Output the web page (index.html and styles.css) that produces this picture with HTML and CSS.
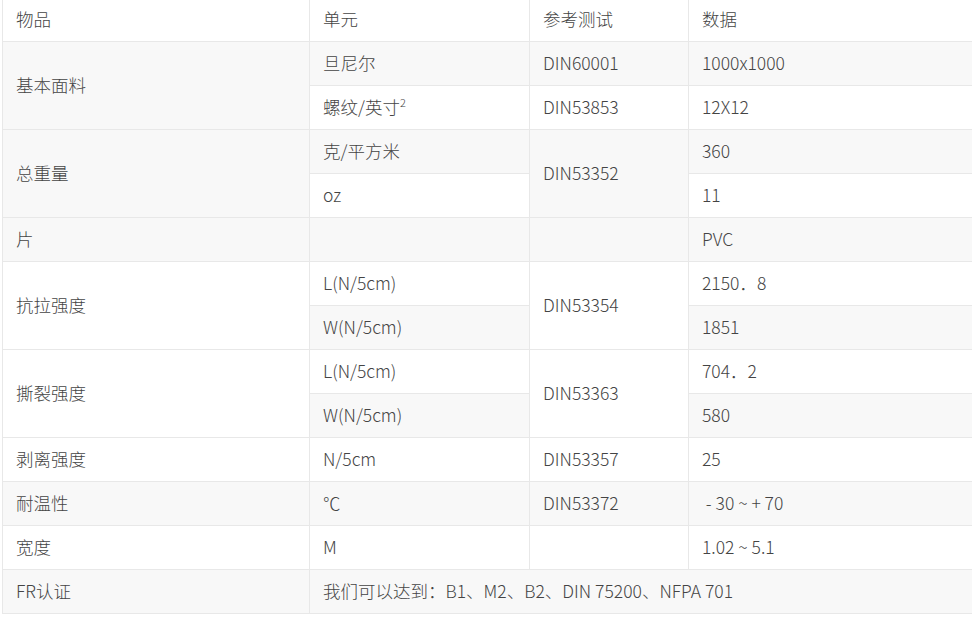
FILE: index.html
```html
<!DOCTYPE html>
<html lang="zh-CN">
<head>
<meta charset="utf-8">
<title>参数表</title>
<link rel="stylesheet" href="styles.css">
</head>
<body>
<div class="wrap">
<table class="spec">
  <colgroup>
    <col class="c1"><col class="c2"><col class="c3"><col class="c4">
  </colgroup>
  <thead>
    <tr><td>物品</td><td>单元</td><td>参考测试</td><td>数据</td></tr>
  </thead>
  <tbody>
    <tr><td rowspan="2">基本面料</td><td>旦尼尔</td><td>DIN60001</td><td>1000x1000</td></tr>
    <tr><td>螺纹/英寸<sup>2</sup></td><td>DIN53853</td><td>12X12</td></tr>
    <tr><td rowspan="2">总重量</td><td>克/平方米</td><td rowspan="2">DIN53352</td><td>360</td></tr>
    <tr><td>oz</td><td>11</td></tr>
    <tr><td>片</td><td></td><td></td><td>PVC</td></tr>
    <tr><td rowspan="2">抗拉强度</td><td>L(N/5cm)</td><td rowspan="2">DIN53354</td><td>2150．8</td></tr>
    <tr><td>W(N/5cm)</td><td>1851</td></tr>
    <tr><td rowspan="2">撕裂强度</td><td>L(N/5cm)</td><td rowspan="2">DIN53363</td><td>704．2</td></tr>
    <tr><td>W(N/5cm)</td><td>580</td></tr>
    <tr><td>剥离强度</td><td>N/5cm</td><td>DIN53357</td><td>25</td></tr>
    <tr><td>耐温性</td><td>℃</td><td>DIN53372</td><td>&nbsp;- 30 ~ + 70</td></tr>
    <tr><td>宽度</td><td>M</td><td></td><td>1.02 ~ 5.1</td></tr>
    <tr><td>FR认证</td><td colspan="3">我们可以达到：B1、M2、B2、DIN 75200、NFPA 701</td></tr>
  </tbody>
</table>
</div>
</body>
</html>
```
FILE: styles.css
```css
html, body {
  margin: 0;
  padding: 0;
  background: #ffffff;
}
.wrap {
  overflow: hidden;
  height: 617px;
}
.spec {
  border-collapse: collapse;
  table-layout: fixed;
  width: 990px;
  margin: -3px 0 0 2px;
  font-family: "Noto Sans CJK SC", "Noto Sans", sans-serif;
  font-weight: 300;
  font-size: 17.5px;
  color: #444444;
}
.c1 { width: 307px; }
.c2 { width: 220px; }
.c3 { width: 159px; }
.c4 { width: 304px; }
.spec td {
  border: 1px solid #e8e8e8;
  height: 41px;
  padding: 0 13px 2px;
  vertical-align: middle;
  line-height: 20px;
  white-space: nowrap;
}
.spec tbody tr:nth-child(odd) {
  background: #f8f8f8;
}
.spec sup {
  font-size: 11px;
  line-height: 0;
  vertical-align: 7px;
}
```
